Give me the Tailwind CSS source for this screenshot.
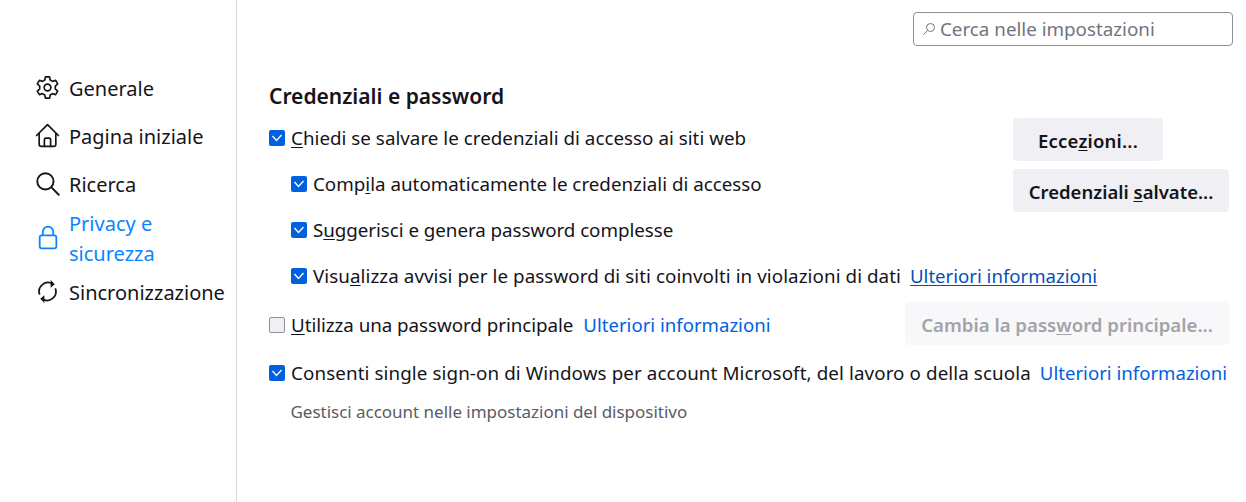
<!DOCTYPE html>
<html lang="it">
<head>
    <meta charset="UTF-8">
    <title>Impostazioni</title>
    <script src="https://cdn.jsdelivr.net/npm/@tailwindcss/browser@4"></script>
</head>
<body class="bg-white text-[#15141a] font-['Noto_Sans',sans-serif] text-[18.8px] leading-[30px] overflow-hidden">
<div class="flex h-[502px] w-[1246px]">
    <!-- sidebar -->
    <nav class="w-[237px] shrink-0 border-r border-[#d9d9dc] pt-[65px] pl-[35px] text-[20px]">
        <a class="flex items-center h-[48px] gap-[9px]">
            <svg class="w-[25px] h-[25px] shrink-0 mb-[4px]" viewBox="0 0 24 24" fill="none" stroke="#15141a" stroke-width="1.6" stroke-linejoin="round"><circle cx="12" cy="12" r="3.2"/><path d="M10 1.8h4l.6 3 2.3 1.3 2.9-1 2 3.5-2.3 2v2.8l2.3 2-2 3.5-2.9-1-2.3 1.3-.6 3h-4l-.6-3-2.3-1.3-2.9 1-2-3.5 2.3-2v-2.8l-2.3-2 2-3.5 2.9 1 2.3-1.3z"/></svg>
            <span>Generale</span>
        </a>
        <a class="flex items-center h-[48px] gap-[9px]">
            <svg class="w-[25px] h-[25px] shrink-0 mb-[4px]" viewBox="0 0 24 24" fill="none" stroke="#15141a" stroke-width="1.6" stroke-linejoin="round" stroke-linecap="round"><path d="M1.500 12 12 1.500 22.500 12M4 10v10.500a2 2 0 0 0 2 2h12a2 2 0 0 0 2-2V10"/><path d="M9 22.500v-6.500a1.500 1.500 0 0 1 1.500-1.500h3a1.500 1.500 0 0 1 1.500 1.500v6.500"/></svg>
            <span>Pagina iniziale</span>
        </a>
        <a class="flex items-center h-[48px] gap-[9px]">
            <svg class="w-[25px] h-[25px] shrink-0 mb-[4px]" viewBox="0 0 24 24" fill="none" stroke="#15141a" stroke-width="1.8" stroke-linecap="round"><circle cx="10" cy="10" r="7.800"/><path d="m15.800 15.800 7 7"/></svg>
            <span>Ricerca</span>
        </a>
        <a class="flex items-center h-[60px] gap-[9px] text-[#0a84ff]">
            <svg class="w-[25px] h-[25px] shrink-0 mb-[4px]" viewBox="0 0 24 24" fill="none" stroke="#0a84ff" stroke-width="1.7"><rect x="4.500" y="10" width="16" height="12.500" rx="2"/><path d="M7.500 10V6.500a5 5 0 0 1 10 0V10"/></svg>
            <span class="w-[120px]">Privacy e sicurezza</span>
        </a>
        <a class="flex items-center h-[48px] gap-[9px]">
            <svg class="w-[25px] h-[25px] shrink-0 mb-[4px]" viewBox="0 0 24 24" fill="none" stroke="#15141a" stroke-width="1.7"><path d="M4.500 15A8.500 8.500 0 0 1 17 4.800M19.500 9A8.500 8.500 0 0 1 7 19.200"/><path fill="#15141a" stroke="none" d="M15 1v7.500l4-3.500zM9 23v-7.500l-4 3.500z"/></svg>
            <span class="whitespace-nowrap">Sincronizzazione</span>
        </a>
    </nav>

    <!-- main -->
    <main class="flex-1 relative pl-[32px]">
        <div class="flex justify-end pt-[12px] pr-[13px]">
            <div class="w-[320px] h-[34px] border border-[#8f8f9d] rounded-[4px] flex items-center pl-[8px] gap-[4px] text-[#73737f] leading-none">
                <svg class="w-[14px] h-[14px]" viewBox="0 0 14 14" fill="none" stroke="#73737f" stroke-width="1"><circle cx="8.500" cy="5.500" r="4"/><path d="M5.500 8.500 1.500 12.500"/></svg>
                <span>Cerca nelle impostazioni</span>
            </div>
        </div>

        <h1 class="mt-[35px] text-[21px] font-semibold leading-[30px] h-[30px]">Credenziali e password</h1>

        <div class="flex mt-[7px] pr-[17px] justify-between">
            <div class="pt-[5px]">
                <label class="flex items-center h-[30px] gap-[6px]">
                    <span class="w-4 h-4 rounded-[2px] bg-[#0061e0] flex items-center justify-center"><svg class="w-3 h-3" viewBox="0 0 12 12" fill="none" stroke="#fff" stroke-width="1.300"><path d="m1.500 4 4 4.500 5-5.500"/></svg></span>
                    <span class="tracking-[0.02px]"><u class="underline-offset-2">C</u>hiedi se salvare le credenziali di accesso ai siti web</span>
                </label>
                <label class="flex items-center h-[30px] gap-[6px] mt-[16px] ml-[22px]">
                    <span class="w-4 h-4 rounded-[2px] bg-[#0061e0] flex items-center justify-center"><svg class="w-3 h-3" viewBox="0 0 12 12" fill="none" stroke="#fff" stroke-width="1.300"><path d="m1.500 4 4 4.500 5-5.500"/></svg></span>
                    <span>Comp<u class="underline-offset-2">i</u>la automaticamente le credenziali di accesso</span>
                </label>
                <label class="flex items-center h-[30px] gap-[6px] mt-[16px] ml-[22px]">
                    <span class="w-4 h-4 rounded-[2px] bg-[#0061e0] flex items-center justify-center"><svg class="w-3 h-3" viewBox="0 0 12 12" fill="none" stroke="#fff" stroke-width="1.300"><path d="m1.500 4 4 4.500 5-5.500"/></svg></span>
                    <span class="tracking-[-0.05px]">S<u class="underline-offset-2">u</u>ggerisci e genera password complesse</span>
                </label>
            </div>
            <div class="flex flex-col items-start gap-[8px] w-[216px] text-[18.5px]">
                <button class="w-[150px] h-[43px] rounded-[4px] bg-[#f0f0f4] font-semibold text-center pt-[2px] tracking-[0.2px]">Ecce<u class="underline-offset-2">z</u>ioni...</button>
                <button class="w-[216px] h-[43px] rounded-[4px] bg-[#f0f0f4] font-semibold text-center pt-[2px]">Credenziali <u class="underline-offset-2">s</u>alvate...</button>
            </div>
        </div>

        <label class="flex items-center h-[30px] gap-[6px] mt-[16px] ml-[22px]">
            <span class="w-4 h-4 rounded-[2px] bg-[#0061e0] flex items-center justify-center"><svg class="w-3 h-3" viewBox="0 0 12 12" fill="none" stroke="#fff" stroke-width="1.300"><path d="m1.500 4 4 4.500 5-5.500"/></svg></span>
            <span class="tracking-[0.07px]">Visu<u class="underline-offset-2">a</u>lizza avvisi per le password di siti coinvolti in violazioni di dati</span>
            <a class="ml-[3px] text-[#0250bb] underline underline-offset-2 text-[18.6px]">Ulteriori informazioni</a>
        </label>

        <div class="flex items-center justify-between h-[43px] mt-[11px] pr-[17px]">
            <label class="flex items-center gap-[6px] mt-[2px]">
                <span class="w-4 h-4 rounded-[2px] bg-[#f0f0f4] border border-[#8f8f9d]"></span>
                <span class="tracking-[-0.05px]"><u class="underline-offset-2">U</u>tilizza una password principale</span>
                <a class="ml-[4px] text-[#0061e0] text-[18.6px]">Ulteriori informazioni</a>
            </label>
            <button class="w-[324px] h-[43px] rounded-[4px] bg-[#f8f8fa] text-[#a3a3a8] font-semibold text-center text-[18.6px] pt-[2px]">Cambia la pass<u class="underline-offset-2">w</u>ord principale...</button>
        </div>

        <label class="flex items-center h-[30px] gap-[6px] mt-[13px]">
            <span class="w-4 h-4 rounded-[2px] bg-[#0061e0] flex items-center justify-center"><svg class="w-3 h-3" viewBox="0 0 12 12" fill="none" stroke="#fff" stroke-width="1.300"><path d="m1.500 4 4 4.500 5-5.500"/></svg></span>
            <span class="tracking-[0.1px]">Consenti single sign-on di Windows per account Microsoft, del lavoro o della scuola</span>
            <a class="ml-[3px] text-[#0061e0] text-[18.6px]">Ulteriori informazioni</a>
        </label>
        <p class="ml-[21.5px] mt-[9px] text-[17px] tracking-[-0.02px] leading-[30px] text-[#5b5b66]">Gestisci account nelle impostazioni del dispositivo</p>
    </main>
</div>
</body>
</html>
